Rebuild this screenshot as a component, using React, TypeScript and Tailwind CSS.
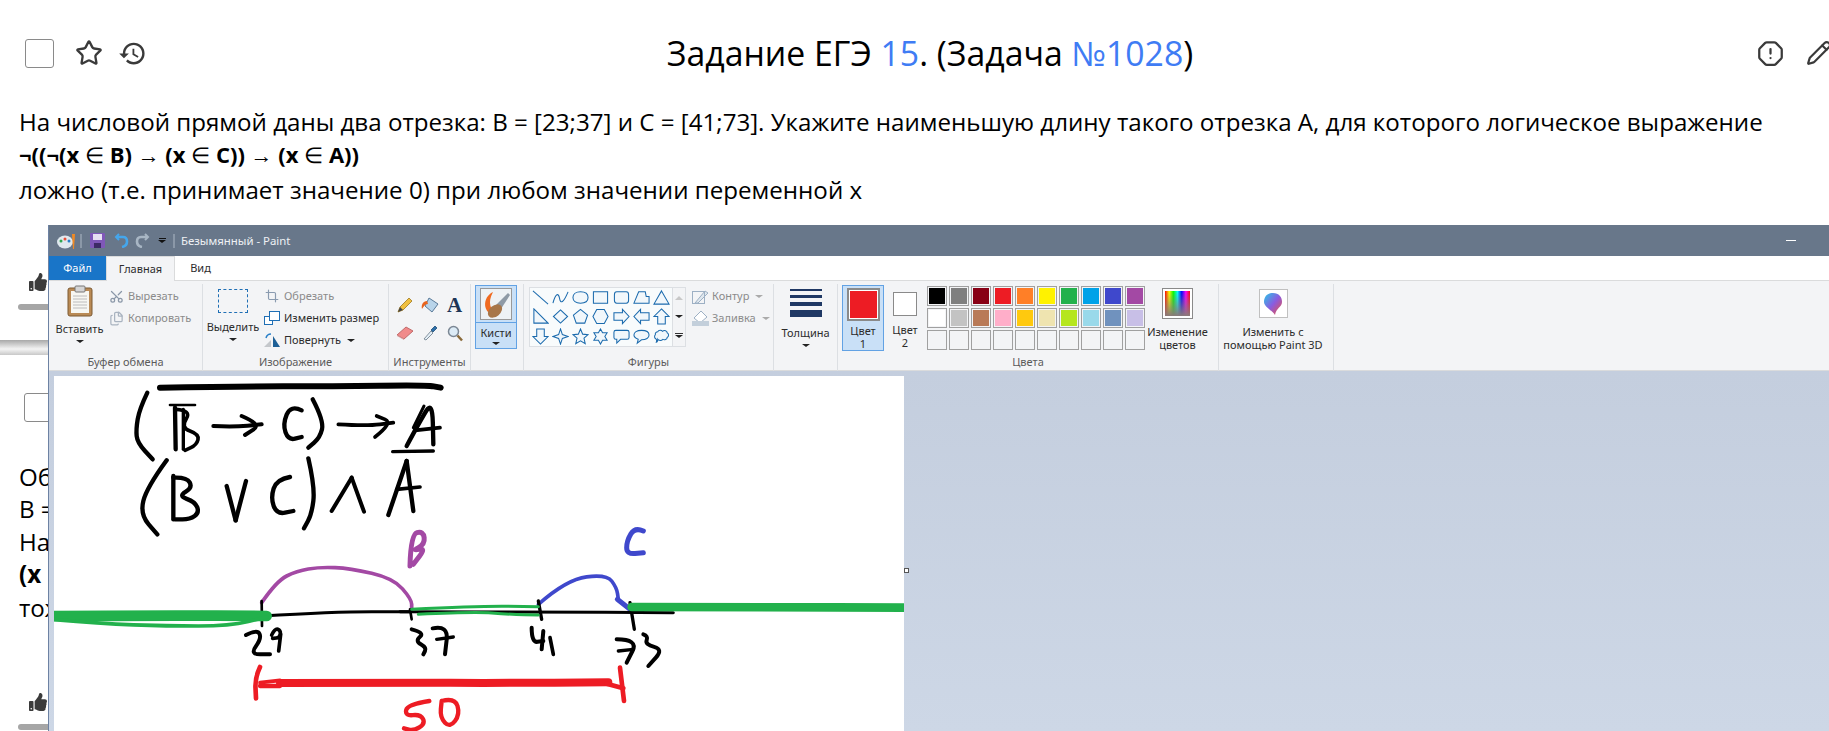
import { Scissors, Files, Crop, Star, OctagonAlert, Pencil } from "lucide-react";
import { MdHistory } from "react-icons/md";
import { FaThumbsUp } from "react-icons/fa";

const paletteTop = ["#000000", "#7f7f7f", "#880015", "#ed1c24", "#ff7f27", "#fff200", "#22b14c", "#00a2e8", "#3f48cc", "#a349a4"];
const paletteBottom = ["#ffffff", "#c3c3c3", "#b97a57", "#ffaec9", "#ffc90e", "#efe4b0", "#b5e61d", "#99d9ea", "#7092be", "#c8bfe7"];

const shapes = [
  "M1 2L17 16",
  "M1 15C4 4 7 4 8 10S12 15 17 3",
  "M9 3C14 3 17 5.5 17 9S14 15 9 15 1 12.500 1 9 4 3 9 3Z",
  "M1.500 3H16.500V15H1.500Z",
  "M4 3H14Q16.500 3 16.500 6V12Q16.500 15 14 15H4Q1.500 15 1.500 12V6Q1.500 3 4 3Z",
  "M6 3H13L14 8H17V15H1Z",
  "M9 2L17 16H1Z",
  "M2 1L17 16H2Z",
  "M9 2L16.500 9 9 16 1.500 9Z",
  "M9 1.500L16.500 7.500 13.500 16H4.500L1.500 7.500Z",
  "M5 1.500H13L17 9 13 16.500H5L1 9Z",
  "M1 5H10V1.500L17 9 10 16.500V13H1Z",
  "M17 5H8V1.500L1 9 8 16.500V13H17Z",
  "M9 1L17 9H13V17H5V9H1Z",
  "M5 1H13V9H17L9 17 1 9H5Z",
  "M9 1L11 7 17 9 11 11 9 17 7 11 1 9 7 7Z",
  "M9 1L11.300 6.500 17 7 12.700 10.800 14 16.500 9 13.500 4 16.500 5.300 10.800 1 7 6.700 6.500Z",
  "M9 1L11.200 5H16L13.600 9 16 13H11.200L9 17 6.800 13H2L4.400 9 2 5H6.800Z",
  "M3 2.500H15Q17 2.500 17 4.500V10Q17 12 15 12H8L4 16V12H3Q1 12 1 10V4.500Q1 2.500 3 2.500Z",
  "M9 2.500C14 2.500 17 4.500 17 7.500S14 12.500 9 12.500L4.500 16 5.500 12C3 11 1 9.500 1 7.500 1 4.500 4 2.500 9 2.500Z",
  "M5 4C6 2 9 2 10 3.500 12 2 15 3 15 5 17 6 17 9 15 10 15 12 12 13 10.500 12 9 13.500 6 13.500 5 12 5 14 4 15 3.500 15 4 14 4 13 3.500 12 1.500 11 1 8.500 2.500 7 2 5.500 3.500 4 5 4Z",
];

// hand-drawn strokes, coordinates are 3x page pixels
const strokes: { c: string; w: number; p: number[] }[] = [
  { c: "#000", w: 18, p: [480, 50, 700, 46, 1000, 46, 1280, 42, 1322, 50] },
  { c: "#000", w: 13, p: [442, 65, 418, 115, 408, 175, 412, 215, 458, 265] },
  { c: "#000", w: 8, p: [510, 102, 585, 102] },
  { c: "#000", w: 13, p: [525, 110, 527, 235] },
  { c: "#000", w: 11, p: [528, 115, 575, 118, 542, 170, 598, 190, 590, 222, 555, 238] },
  { c: "#000", w: 10, p: [550, 115, 550, 235] },
  { c: "#000", w: 12, p: [640, 165, 700, 168, 785, 160] },
  { c: "#000", w: 12, p: [725, 135, 785, 160, 735, 192] },
  { c: "#000", w: 13, p: [905, 118, 872, 102, 848, 160, 865, 208, 905, 198] },
  { c: "#000", w: 13, p: [938, 85, 972, 150, 960, 200, 925, 230] },
  { c: "#000", w: 11, p: [1015, 160, 1100, 165, 1180, 155] },
  { c: "#000", w: 11, p: [1125, 198, 1180, 155, 1130, 135] },
  { c: "#000", w: 13, p: [1220, 225, 1260, 150, 1297, 90, 1300, 220] },
  { c: "#000", w: 11, p: [1245, 178, 1320, 170] },
  { c: "#000", w: 9, p: [1272, 105, 1240, 170] },
  { c: "#000", w: 10, p: [1178, 242, 1300, 240] },
  { c: "#000", w: 13, p: [500, 268, 440, 350, 420, 430, 472, 490] },
  { c: "#000", w: 13, p: [520, 315, 520, 445] },
  { c: "#000", w: 13, p: [520, 320, 560, 318, 578, 350, 535, 375, 585, 392, 598, 425, 570, 445, 525, 445] },
  { c: "#000", w: 13, p: [680, 345, 707, 448] },
  { c: "#000", w: 13, p: [707, 448, 738, 330] },
  { c: "#000", w: 13, p: [870, 318, 830, 325, 812, 380, 830, 430, 880, 420] },
  { c: "#000", w: 13, p: [925, 262, 945, 350, 935, 430, 912, 472] },
  { c: "#000", w: 12, p: [995, 420, 1055, 320] },
  { c: "#000", w: 12, p: [1055, 320, 1092, 422] },
  { c: "#000", w: 13, p: [1165, 432, 1220, 270] },
  { c: "#000", w: 13, p: [1220, 270, 1240, 420] },
  { c: "#000", w: 11, p: [1190, 355, 1260, 348] },
  { c: "#a349a4", w: 15, p: [1230, 585, 1232, 490, 1270, 480, 1275, 520, 1235, 540, 1278, 530, 1240, 580] },
  { c: "#a349a4", w: 11, p: [785, 695, 830, 630, 890, 600, 960, 588, 1050, 592, 1180, 622, 1235, 685, 1235, 715] },
  { c: "#000", w: 9, p: [785, 735, 1000, 722, 1230, 722] },
  { c: "#000", w: 8, p: [785, 690, 786, 765] },
  { c: "#000", w: 8, p: [1230, 715, 1235, 745] },
  { c: "#22b14c", w: 32, p: [162, 735, 500, 733, 800, 735] },
  { c: "#22b14c", w: 11, p: [162, 746, 300, 758, 500, 765, 690, 765, 800, 738] },
  { c: "#000", w: 12, p: [738, 792, 772, 775, 785, 802, 750, 850, 810, 850] },
  { c: "#000", w: 11, p: [815, 792, 825, 772, 842, 778, 840, 800, 818, 802] },
  { c: "#000", w: 11, p: [842, 790, 836, 840] },
  { c: "#000", w: 12, p: [1235, 775, 1275, 785, 1245, 810, 1280, 830, 1270, 850] },
  { c: "#000", w: 12, p: [1298, 772, 1345, 762, 1335, 850] },
  { c: "#000", w: 10, p: [1310, 805, 1360, 798] },
  { c: "#ed1c24", w: 24, p: [840, 936, 1200, 935, 1500, 936, 1825, 934] },
  { c: "#ed1c24", w: 11, p: [780, 935, 840, 928] },
  { c: "#ed1c24", w: 13, p: [780, 945, 840, 945] },
  { c: "#ed1c24", w: 14, p: [780, 888, 765, 920, 768, 982] },
  { c: "#ed1c24", w: 14, p: [1820, 938, 1870, 952] },
  { c: "#ed1c24", w: 14, p: [1860, 890, 1872, 990] },
  { c: "#ed1c24", w: 13, p: [1288, 990, 1222, 1000, 1215, 1035, 1262, 1030, 1276, 1058, 1240, 1080, 1212, 1072] },
  { c: "#ed1c24", w: 13, p: [1325, 990, 1365, 980, 1380, 1030, 1350, 1070, 1320, 1040, 1325, 990] },
  { c: "#3f48cc", w: 15, p: [1930, 480, 1905, 468, 1880, 510, 1880, 550, 1930, 545] },
  { c: "#3f48cc", w: 11, p: [1615, 700, 1700, 625, 1820, 610, 1850, 650, 1855, 685] },
  { c: "#3f48cc", w: 15, p: [1852, 685, 1890, 715] },
  { c: "#000", w: 9, p: [1200, 722, 1610, 722, 2020, 725] },
  { c: "#000", w: 10, p: [1615, 690, 1625, 745] },
  { c: "#000", w: 10, p: [1890, 695, 1903, 775] },
  { c: "#22b14c", w: 9, p: [1235, 715, 1430, 705, 1615, 707] },
  { c: "#22b14c", w: 9, p: [1255, 730, 1420, 722, 1530, 730, 1615, 732] },
  { c: "#22b14c", w: 26, p: [1895, 708, 2300, 708, 2712, 710] },
  { c: "#000", w: 12, p: [1595, 770, 1595, 815, 1630, 810] },
  { c: "#000", w: 12, p: [1630, 780, 1625, 835] },
  { c: "#000", w: 11, p: [1650, 800, 1660, 850] },
  { c: "#000", w: 12, p: [1850, 805, 1915, 805, 1880, 875] },
  { c: "#000", w: 10, p: [1855, 840, 1900, 835] },
  { c: "#000", w: 12, p: [1930, 790, 1945, 795, 1935, 820, 1990, 835, 1945, 885] },
];

function strokePath(p: number[]) {
  let d = `M${p[0]} ${p[1]}`;
  if (p.length === 4) return `${d}L${p[2]} ${p[3]}`;
  for (let i = 2; i < p.length - 2; i += 2) {
    const mx = (p[i] + p[i + 2]) / 2;
    const my = (p[i + 1] + p[i + 3]) / 2;
    d += `Q${p[i]} ${p[i + 1]} ${mx} ${my}`;
  }
  return `${d}L${p[p.length - 2]} ${p[p.length - 1]}`;
}

function Caret({ className = "" }: { className?: string }) {
  return <span className={`inline-block w-0 h-0 border-x-[4px] border-x-transparent border-t-[3px] border-t-[#222] ${className}`} />;
}

function Group({ width, label, children }: { width: string; label: string; children: React.ReactNode }) {
  return (
    <div className={`${width} shrink-0 flex flex-col h-[87px] border-r border-[#dcdfe3]`}>
      <div className="flex-1 flex min-h-0">{children}</div>
      <div className="h-[18px] text-center text-[11px] leading-[18px] text-[#5b5b5b]">{label}</div>
    </div>
  );
}

function SmallAction({ icon, label, muted, caret }: { icon: React.ReactNode; label: string; muted?: boolean; caret?: boolean }) {
  return (
    <div className={`h-[22px] flex items-center gap-[3px] text-[11px] ${muted ? "text-[#8b8b8b]" : "text-[#2c2c2c]"}`}>
      <span className="w-[18px] h-[18px] flex items-center justify-center">{icon}</span>
      {label}
      {caret && <Caret className={muted ? "ml-[3px] !border-t-[#aaa]" : "ml-[3px]"} />}
    </div>
  );
}

function Swatch({ color }: { color?: string }) {
  return (
    <div className="w-5 h-5 border border-[#a0a0a0] p-px">
      {color && <div className="w-full h-full" style={{ backgroundColor: color }} />}
    </div>
  );
}

function Ribbon() {
  return (
    <div className="h-[91px] bg-[#f3f4f6] border-y border-[#dadbdc] flex pt-[3px] text-[#2c2c2c] text-[11px] shrink-0">
      <Group width="w-[154px]" label="Буфер обмена">
        <div className="w-[56px] pl-[5px] flex flex-col items-center">
          <svg width="26" height="32" viewBox="0 0 26 32" className="mt-[1px]">
            <rect x="1" y="3" width="24" height="28" rx="2" fill="#b98a55" stroke="#7d5a33" />
            <rect x="4" y="6" width="18" height="22" fill="#f7f7f2" />
            <path d="M6 11H20M6 14H20M6 17H20M6 20H20M6 23H20" stroke="#bcbcbc" />
            <rect x="8" y="1" width="10" height="6" rx="1" fill="#d5d5d5" stroke="#777" />
          </svg>
          <div className="mt-[4px] leading-[16px]">Вставить</div>
          <Caret className="mt-[3px]" />
        </div>
        <div className="pl-[2px] pt-[1px]">
          <SmallAction muted icon={<Scissors size={15} className="text-[#8a97a8] -rotate-90" />} label="Вырезать" />
          <SmallAction muted icon={<Files size={15} className="text-[#a9b3c0]" />} label="Копировать" />
        </div>
      </Group>

      <Group width="w-[186px]" label="Изображение">
        <div className="w-[60px] flex flex-col items-center">
          <div className="w-[30px] h-[24px] mt-[5px] mb-[6px] border border-dashed border-[#1f6fb5]" />
          <div className="leading-[16px]">Выделить</div>
          <Caret className="mt-[3px]" />
        </div>
        <div className="pt-[1px]">
          <SmallAction muted icon={<Crop size={14} className="text-[#8a9bb0]" />} label="Обрезать" />
          <SmallAction
            icon={
              <svg width="16" height="16" viewBox="0 0 16 16" fill="none" stroke="#1f6fb5">
                <rect x="0.500" y="6.500" width="8" height="8" fill="#fff" />
                <rect x="5.500" y="1.500" width="10" height="9" fill="#fff" />
              </svg>
            }
            label="Изменить размер"
          />
          <SmallAction
            caret
            icon={
              <svg width="18" height="16" viewBox="0 0 18 16">
                <path d="M1 15L8 8V15Z" fill="#c4c7cb" />
                <path d="M10 4V15H17Z" fill="#1d5f96" />
                <path d="M3 6Q4 2 8 2" fill="none" stroke="#2a80c8" strokeWidth="1.500" />
              </svg>
            }
            label="Повернуть"
          />
        </div>
      </Group>

      <Group width="w-[82px]" label="Инструменты">
        <div className="grid grid-cols-3 w-full h-[56px] mt-[6px] pl-[3px] pr-[3px] place-items-center">
          <svg width="16" height="16" viewBox="0 0 16 16">
            <path d="M1 15L3 10 12 1 15 4 6 13Z" fill="#f0c040" stroke="#a07820" strokeWidth="0.800" />
            <path d="M1 15L3 10 6 13Z" fill="#444" />
          </svg>
          <svg width="18" height="18" viewBox="0 0 18 18">
            <path d="M8 2L17 8 11 16 4 10Z" fill="#b8d4ea" stroke="#5a7a99" />
            <path d="M6 5C2 5 0 9 1 13 3 10 4 8 7 8Z" fill="#e8641e" />
          </svg>
          <span className="font-['Liberation_Serif',serif] font-bold text-[21px] leading-none text-[#1d3557]">A</span>
          <svg width="18" height="16" viewBox="0 0 18 16">
            <path d="M1 10L10 2 17 6 8 14Z" fill="#f08a8a" stroke="#c06a6a" />
            <path d="M1 10L8 14V15L1 11Z" fill="#d9a0a0" />
          </svg>
          <svg width="16" height="16" viewBox="0 0 16 16">
            <path d="M2 14L9 6 11 8 4 15Z" fill="#e3eef6" stroke="#6a7a88" strokeWidth="0.800" />
            <path d="M9 5L13 1 15 3 11 7Z" fill="#2e6fa8" stroke="#1f4f7a" strokeWidth="0.800" />
          </svg>
          <svg width="16" height="17" viewBox="0 0 16 17" fill="none">
            <circle cx="6.500" cy="6.500" r="5" fill="#dcebf6" stroke="#7b8794" strokeWidth="1.500" />
            <path d="M10.500 10.500L15 15.500" stroke="#8a6a3a" strokeWidth="2.500" />
          </svg>
        </div>
      </Group>

      <Group width="w-[53px]" label="">
        <div className="ml-[4px] w-[42px] h-[64px] mt-[1px] bg-[#c9e0f7] border border-[#62a2e4] flex flex-col items-center">
          <div className="w-[32px] h-[32px] mt-[2px] shrink-0 border border-[#999] bg-[#eef2f5]">
            <svg width="30" height="30" viewBox="0 0 30 30">
              <path d="M12 3C1 8 1 25 15 27 10 20 6 14 12 3Z" fill="#ef6a21" />
              <path d="M12 19L27 4 29 6 18 23Z" fill="#8e9aa6" />
              <ellipse cx="14" cy="22" rx="8" ry="5.500" fill="#a87648" transform="rotate(-40 14 22)" />
            </svg>
          </div>
          <div className="w-full border-t border-[#62a2e4] mt-[2px] text-center leading-[15px] pt-[2px]">Кисти</div>
          <Caret className="mt-[2px]" />
        </div>
      </Group>

      <Group width="w-[250px]" label="Фигуры">
        <div className="ml-[5px] w-[157px] h-[60px] mt-[3px] border border-[#dcdfe3] bg-[#f8fbfc] flex shrink-0">
          <div className="w-[142px] grid grid-cols-7 grid-rows-3 place-items-center">
            {shapes.map((d) => (
              <svg key={d} width="17" height="17" viewBox="0 0 18 18" fill="none" stroke="#1a6aad" strokeWidth="1.100">
                <path d={d} fill={d.endsWith("Z") ? "#f1f7fb" : "none"} />
              </svg>
            ))}
          </div>
          <div className="flex-1 border-l border-[#dcdfe3] bg-[#f3f4f6] flex flex-col items-center justify-around">
            <span className="w-0 h-0 border-x-[4px] border-x-transparent border-b-[4px] border-b-[#c8c8c8]" />
            <Caret />
            <span className="flex flex-col items-center gap-px">
              <span className="w-[8px] h-px bg-[#333]" />
              <Caret />
            </span>
          </div>
        </div>
        <div className="pl-[5px] pt-[1px]">
          <SmallAction
            muted
            caret
            icon={
              <svg width="17" height="16" viewBox="0 0 17 16" fill="none" stroke="#9db0c4">
                <path d="M3 15L13 3 16 5 6 15Z" fill="#dfe7ee" />
                <rect x="0.500" y="3.500" width="12" height="12" />
              </svg>
            }
            label="Контур"
          />
          <SmallAction
            muted
            caret
            icon={
              <svg width="17" height="16" viewBox="0 0 17 16">
                <path d="M9 1L15 7 8 13 2 8Z" fill="#fff" stroke="#9db0c4" />
                <rect x="0" y="11" width="17" height="5" fill="#c3cfdb" />
              </svg>
            }
            label="Заливка"
          />
        </div>
      </Group>

      <Group width="w-[64px]" label="">
        <div className="w-full flex flex-col items-center">
          <div className="w-[32px] flex flex-col mt-[5px] gap-[3px]">
            <div className="h-[2px] bg-[#1f3864]" />
            <div className="h-[3px] bg-[#1f3864] mt-[1px]" />
            <div className="h-[4px] bg-[#1f3864] mt-[1px]" />
            <div className="h-[7px] bg-[#1f3864] mt-[1px]" />
          </div>
          <div className="mt-[8px] leading-[16px]">Толщина</div>
          <Caret className="mt-[3px]" />
        </div>
      </Group>

      <Group width="w-[381px]" label="Цвета">
        <div className="ml-[4px] w-[42px] h-[66px] mt-[1px] bg-[#c9e0f7] border border-[#62a2e4] flex flex-col items-center shrink-0">
          <div className="w-[33px] h-[33px] mt-[2px] shrink-0 border-2 border-[#8a8a8a] p-px bg-white">
            <div className="w-full h-full bg-[#ed1c24]" />
          </div>
          <div className="text-center leading-[13px] mt-[3px]">Цвет<br />1</div>
        </div>
        <div className="w-[42px] flex flex-col items-center shrink-0">
          <div className="w-[24px] h-[24px] mt-[8px] border border-[#8a8a8a] bg-white" />
          <div className="text-center leading-[13px] mt-[7px]">Цвет<br />2</div>
        </div>
        <div className="ml-[1px] mt-[2px] w-[218px] grid grid-cols-10 gap-[2px] content-start shrink-0">
          {paletteTop.map((c) => <Swatch key={c} color={c} />)}
          {paletteBottom.map((c) => <Swatch key={c} color={c} />)}
          {paletteTop.map((c) => <Swatch key={`empty-${c}`} />)}
        </div>
        <div className="flex-1 flex flex-col items-center pr-[8px]">
          <div className="w-[29px] h-[29px] mt-[5px] border-2 border-white outline outline-1 outline-[#8a8a8a] bg-[linear-gradient(to_bottom,transparent,#8a7a7a),linear-gradient(to_right,#f00,#ff0,#0f0,#0ff,#00f,#f0f,#f00)]" />
          <div className="text-center leading-[13px] mt-[7px]">Изменение<br />цветов</div>
        </div>
      </Group>

      <Group width="w-[115px]" label="">
        <div className="w-full flex flex-col items-center pr-[6px]">
          <div className="w-[29px] h-[29px] mt-[5px] border border-[#c0c0c0] bg-white flex items-center justify-center">
            <svg width="20" height="24" viewBox="0 0 20 24">
              <defs>
                <linearGradient id="drop" x1="0" y1="0" x2="1" y2="1">
                  <stop offset="0" stopColor="#27c8e8" />
                  <stop offset="0.500" stopColor="#8a5ce0" />
                  <stop offset="1" stopColor="#f0503a" />
                </linearGradient>
              </defs>
              <path d="M10 1C16 1 19 5 19 10 19 15 13 16 12 23 9 18 1 15 1 10 1 5 4 1 10 1Z" fill="url(#drop)" />
            </svg>
          </div>
          <div className="text-center leading-[13px] mt-[7px]">Изменить с<br />помощью Paint 3D</div>
        </div>
      </Group>
    </div>
  );
}

function PaintWindow() {
  return (
    <div className="absolute left-[48px] right-0 top-[225px] bottom-0 flex flex-col border-l border-[#6d82a3] font-['Noto_Sans',sans-serif] overflow-hidden">
      <div className="h-[31px] bg-[#68778a] flex items-center shrink-0 text-[#eef1f4] text-[11.400px]">
        <svg width="20" height="18" viewBox="0 0 20 18" className="ml-[8px]">
          <ellipse cx="8" cy="10" rx="8" ry="6.500" fill="#dfe8ee" />
          <circle cx="4" cy="9" r="1.500" fill="#2fa84f" />
          <circle cx="8" cy="7" r="1.500" fill="#e8503a" />
          <circle cx="12" cy="9" r="1.500" fill="#2a80c8" />
          <path d="M15 2H18L17 17H16Z" fill="#f08a24" />
        </svg>
        <span className="w-[2px] h-[14px] bg-[#8b98a8] ml-[3px]" />
        <svg width="15" height="15" viewBox="0 0 15 15" className="ml-[8px]">
          <rect width="15" height="15" rx="1" fill="#7f58b8" />
          <rect x="3" y="1" width="9" height="6" fill="#e6e0f2" />
          <rect x="4" y="10" width="7" height="5" fill="#3d2a66" />
        </svg>
        <svg width="15" height="15" viewBox="0 0 15 15" fill="none" stroke="#45a6ec" strokeWidth="2.600" className="ml-[9px]">
          <path d="M3 4H9Q13 4 13 8.500T8 14" />
          <path d="M5 1L2 4 5 7" strokeWidth="2" />
        </svg>
        <svg width="15" height="15" viewBox="0 0 15 15" fill="none" stroke="#a8b6c4" strokeWidth="2.600" className="ml-[6px]">
          <path d="M12 4H6Q2 4 2 8.500T7 14" />
          <path d="M10 1L13 4 10 7" strokeWidth="2" />
        </svg>
        <span className="ml-[8px] flex flex-col items-center gap-px">
          <span className="w-[7px] h-px bg-[#111]" />
          <Caret className="!border-t-[#111]" />
        </span>
        <span className="w-[2px] h-[14px] bg-[#8b98a8] ml-[7px]" />
        <span className="ml-[6px]">Безымянный - Paint</span>
        <span className="ml-auto mr-[33px] w-[10px] h-px bg-white" />
      </div>

      <div className="h-[24px] bg-white flex shrink-0 text-[11px]">
        <div className="w-[57px] bg-[#1975c8] text-white flex items-center justify-center">Файл</div>
        <div className="w-[69px] flex items-center justify-center text-[#2c2c2c] border-x border-t border-[#dadbdc] bg-[#f3f4f6] -mb-px z-10">Главная</div>
        <div className="w-[51px] flex items-center justify-center text-[#2c2c2c]">Вид</div>
      </div>

      <Ribbon />

      <div className="relative flex-1 pl-[5px] pt-[5px] bg-[linear-gradient(to_bottom,#c4cede,#cdd7e6)]">
        <div className="w-[850px] h-full bg-white overflow-hidden">
          <svg width="850" height="355" viewBox="162 15 2550 1065" fill="none" strokeLinecap="round" strokeLinejoin="round">
            {strokes.map((s, i) => (
              <path key={i} d={strokePath(s.p)} stroke={s.c} strokeWidth={s.w} />
            ))}
          </svg>
        </div>
        <div className="absolute left-[855px] top-[197px] w-[5px] h-[5px] bg-white border border-[#555]" />
      </div>
    </div>
  );
}

function VoteRow({ top }: { top: string }) {
  return (
    <div className={top}>
      <FaThumbsUp className="ml-[29px] text-[#3b3b3b]" size={18} />
      <div className="ml-[18px] mt-[13px] h-[6px] w-[60px] rounded-full bg-[#a6a6a6]" />
    </div>
  );
}

function Sym({ children }: { children: React.ReactNode }) {
  return <span className="font-normal font-['Liberation_Serif',serif]">{children}</span>;
}

export default function App() {
  return (
    <div className="relative h-[731px] overflow-hidden bg-white text-black font-['Open_Sans',sans-serif]">
      <div className="pt-[38px]">
        <div className="flex items-center h-[30px]">
          <div className="w-[168px] shrink-0 flex items-center pl-[25px]">
            <div className="w-[29px] h-[29px] rounded-[3px] border border-[#8a8a8a]" />
            <Star size={28} strokeWidth={2} className="ml-[21px] text-[#3a3a3a]" />
            <MdHistory size={29} className="ml-[15px] text-[#3a3a3a]" />
          </div>
          <h1 className="flex-1 text-center text-[33.800px] leading-[40px]">
            Задание ЕГЭ <span className="text-[#3f7cf4]">15</span>. (Задача <span className="text-[#3f7cf4]">№1028</span>)
          </h1>
          <div className="w-[140px] shrink-0 flex items-center justify-end gap-[22px] -mr-[3px]">
            <OctagonAlert size={27} strokeWidth={2} className="text-[#3a3a3a]" />
            <Pencil size={26} strokeWidth={2} className="text-[#3a3a3a]" />
          </div>
        </div>
        <div className="mt-[37px] px-[19px] text-[24.130px] leading-[33.300px]">
          <p>На числовой прямой даны два отрезка: B = [23;37] и C = [41;73]. Укажите наименьшую длину такого отрезка A, для которого логическое выражение</p>
          <p className="font-bold text-[22px]">¬((¬(x <Sym>∈</Sym> B) <Sym>→</Sym> (x <Sym>∈</Sym> C)) <Sym>→</Sym> (x <Sym>∈</Sym> A))</p>
          <p>ложно (т.е. принимает значение 0) при любом значении переменной x</p>
        </div>
      </div>

      <VoteRow top="mt-[67px]" />
      <div className="mt-[30px] h-[15px] bg-[linear-gradient(to_bottom,#a8a8a8,#f4f4f4_60%,#c8c8c8)]" />

      <div className="mt-[38px] pl-[24px]">
        <div className="w-[29px] h-[29px] rounded-[3px] border border-[#8a8a8a]" />
      </div>
      <div className="mt-[39px] px-[19px] text-[24.130px] leading-[32.500px]">
        <p>Об</p>
        <p>В =</p>
        <p>На</p>
        <p className="font-bold">(x <Sym>∈</Sym></p>
        <p>тож</p>
      </div>
      <VoteRow top="mt-[69px]" />

      <PaintWindow />
    </div>
  );
}
